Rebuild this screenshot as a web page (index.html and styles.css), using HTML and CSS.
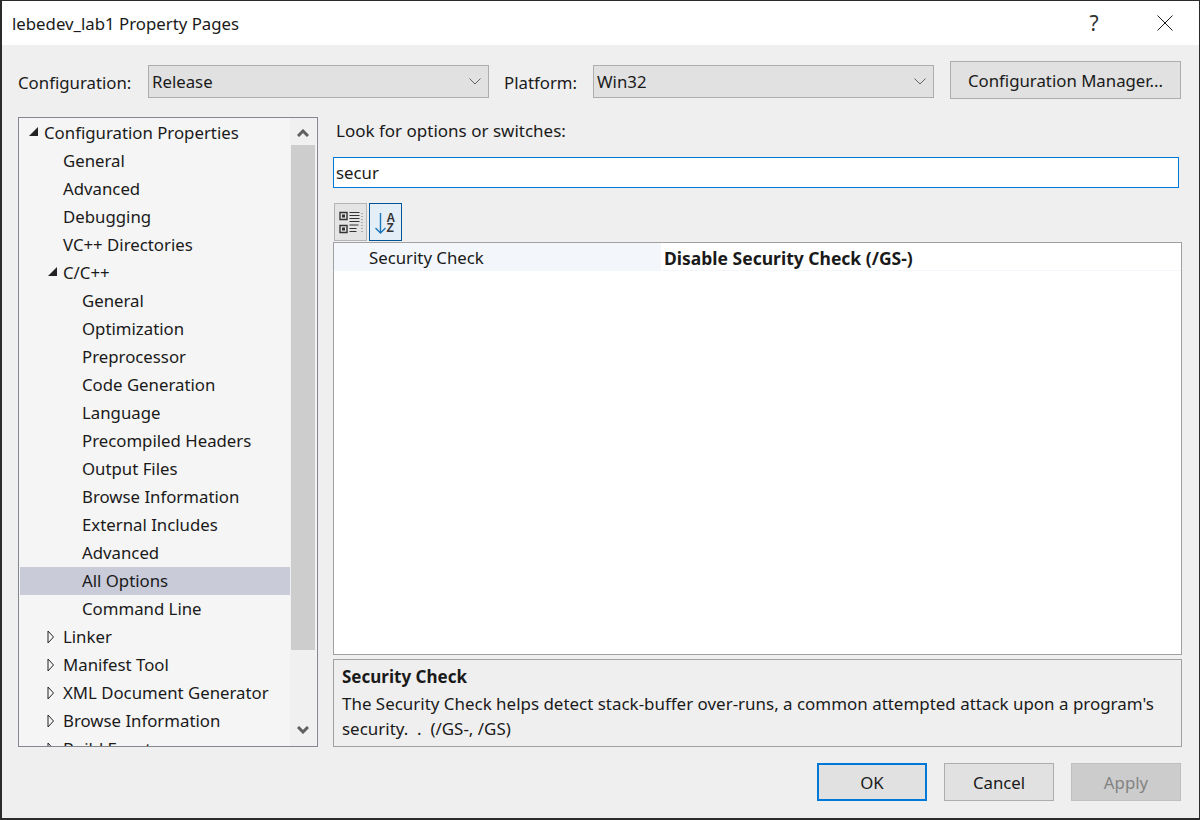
FILE: index.html
```html
<!DOCTYPE html>
<html lang="en">
<head>
    <meta charset="UTF-8">
    <title>lebedev_lab1 Property Pages</title>
    <link rel="stylesheet" href="styles.css">
</head>
<body>
    <div class="dialog">
        <div class="titlebar">
            <span class="title">lebedev_lab1 Property Pages</span>
            <span class="help">?</span>
            <svg class="close" width="16" height="16" viewBox="0 0 16 16"><path d="M.5.5l15 15M15.500.5l-15 15" stroke="#1a1a1a" fill="none"/></svg>
        </div>

        <div class="toprow">
            <label class="lbl lbl-config">Configuration:</label>
            <div class="combo combo-config">
                <span>Release</span>
                <svg width="12" height="7" viewBox="0 0 12 7"><path d="M.5.5L6 6l5.500-5.500" stroke="#606060" fill="none"/></svg>
            </div>
            <label class="lbl lbl-platform">Platform:</label>
            <div class="combo combo-platform">
                <span>Win32</span>
                <svg width="12" height="7" viewBox="0 0 12 7"><path d="M.5.5L6 6l5.500-5.500" stroke="#606060" fill="none"/></svg>
            </div>
            <button class="btn btn-manager">Configuration Manager...</button>
        </div>

        <div class="main">
            <div class="tree">
                <ul class="tree-list">
                    <li class="row"><svg class="arrow" width="12" height="12" viewBox="0 0 12 12"><path d="M10 1v9H1z" fill="#222"/></svg>Configuration Properties</li>
                    <li class="row lv1">General</li>
                    <li class="row lv1">Advanced</li>
                    <li class="row lv1">Debugging</li>
                    <li class="row lv1">VC++ Directories</li>
                    <li class="row lv0b"><svg class="arrow" width="12" height="12" viewBox="0 0 12 12"><path d="M10 1v9H1z" fill="#222"/></svg>C/C++</li>
                    <li class="row lv2">General</li>
                    <li class="row lv2">Optimization</li>
                    <li class="row lv2">Preprocessor</li>
                    <li class="row lv2">Code Generation</li>
                    <li class="row lv2">Language</li>
                    <li class="row lv2">Precompiled Headers</li>
                    <li class="row lv2">Output Files</li>
                    <li class="row lv2">Browse Information</li>
                    <li class="row lv2">External Includes</li>
                    <li class="row lv2">Advanced</li>
                    <li class="row lv2 selected">All Options</li>
                    <li class="row lv2">Command Line</li>
                    <li class="row lv0b"><svg class="arrow" width="8" height="14" viewBox="0 0 8 14"><path d="M1 1l5.500 6L1 13z" fill="none" stroke="#222"/></svg>Linker</li>
                    <li class="row lv0b"><svg class="arrow" width="8" height="14" viewBox="0 0 8 14"><path d="M1 1l5.500 6L1 13z" fill="none" stroke="#222"/></svg>Manifest Tool</li>
                    <li class="row lv0b"><svg class="arrow" width="8" height="14" viewBox="0 0 8 14"><path d="M1 1l5.500 6L1 13z" fill="none" stroke="#222"/></svg>XML Document Generator</li>
                    <li class="row lv0b"><svg class="arrow" width="8" height="14" viewBox="0 0 8 14"><path d="M1 1l5.500 6L1 13z" fill="none" stroke="#222"/></svg>Browse Information</li>
                    <li class="row lv0b"><svg class="arrow" width="8" height="14" viewBox="0 0 8 14"><path d="M1 1l5.500 6L1 13z" fill="none" stroke="#222"/></svg>Build Events</li>
                </ul>
                <div class="scrollbar">
                    <svg class="sb-arrow" width="12" height="8" viewBox="0 0 12 8"><path d="M1 7l5-5 5 5" stroke="#606060" stroke-width="3" fill="none"/></svg>
                    <div class="thumb"></div>
                    <svg class="sb-arrow" width="12" height="8" viewBox="0 0 12 8"><path d="M1 1l5 5 5-5" stroke="#606060" stroke-width="3" fill="none"/></svg>
                </div>
            </div>

            <div class="panel">
                <div class="look">Look for options or switches:</div>
                <div class="search">secur</div>
                <div class="toolbar">
                    <div class="tool tool-cat">
                        <svg width="24" height="24" viewBox="0 0 24 24">
                            <path d="M1 2.500h7v7H1zM1 15.500h7v7H1z" fill="none" stroke="#333" stroke-width="1.400"/>
                            <path d="M3 4.500h3v3H3zM3 17.500h3v3H3z" fill="#333"/>
                            <path d="M10.500 2.500h10M10.500 5.500h10M10.500 8.500h10M10.500 11.500h10M10.500 15h9M10.500 18.500h7M10.500 21.500h7" stroke="#333" fill="none"/>
                            <path d="M23 3v1M23 6v1M23 9v1M23 12v1M23 15v1M23 18v1M23 21v1" stroke="#777" fill="none"/>
                        </svg>
                    </div>
                    <div class="tool tool-az">
                        <svg width="26" height="24" viewBox="0 0 26 24">
                            <path d="M7.500 3v20M2.500 18l5 5 5-5" stroke="#1c76bc" stroke-width="1.400" fill="none"/>
                            <text class="az" x="13.500" y="11.500">A</text>
                            <text class="az" x="13.500" y="21.500">Z</text>
                        </svg>
                    </div>
                </div>
                <div class="grid">
                    <div class="grid-row">
                        <div class="grid-name">Security Check</div>
                        <div class="grid-value">Disable Security Check (/GS-)</div>
                    </div>
                </div>
                <div class="desc">
                    <div class="desc-title">Security Check</div>
                    <p>The Security Check helps detect stack-buffer over-runs, a common attempted attack upon a program's security.&nbsp; .&nbsp; (/GS-, /GS)</p>
                </div>
            </div>
        </div>

        <div class="footer">
            <button class="btn btn-foot btn-ok">OK</button>
            <button class="btn btn-foot">Cancel</button>
            <button class="btn btn-foot btn-off">Apply</button>
        </div>
    </div>
</body>
</html>
```

FILE: styles.css
```css
* {
    box-sizing: border-box;
}

html, body {
    margin: 0;
    height: 100%;
}

body {
    font-family: "Noto Sans", "Open Sans", sans-serif;
    font-size: 16.8px;
    color: #1a1a1a;
    overflow: hidden;
}

.dialog {
    width: 1200px;
    height: 820px;
    background-color: #efefef;
    border: 1px solid #2b2b2b;
    border-left-width: 2px;
    border-bottom-width: 2px;
    display: flex;
    flex-direction: column;
}

.titlebar {
    height: 44px;
    background-color: #fff;
    display: flex;
    align-items: center;
    padding-left: 10px;
    flex: none;
}

.title {
    flex: 1;
}

.help {
    font-size: 21px;
    width: 24px;
    margin-right: 51px;
    text-align: center;
    color: #333;
}

.close {
    margin-right: 26px;
}

.toprow {
    height: 72px;
    display: flex;
    align-items: flex-start;
    flex: none;
}

.lbl {
    margin-top: 26px;
    line-height: 24px;
}

.lbl-config {
    margin-left: 16px;
    width: 130px;
}

.lbl-platform {
    margin-left: 15px;
    width: 89px;
}

.combo {
    margin-top: 20px;
    width: 341px;
    height: 33px;
    background-color: #e1e1e1;
    border: 1px solid #adadad;
    display: flex;
    align-items: center;
    justify-content: space-between;
    padding: 0 7px 0 3px;
}

.btn {
    font-family: inherit;
    font-size: 16.8px;
    color: #1a1a1a;
    background-color: #e1e1e1;
    border: 1px solid #adadad;
    padding: 0;
}

.btn-manager {
    margin-top: 16px;
    margin-left: 16px;
    width: 231px;
    height: 38px;
}

.main {
    height: 630px;
    display: flex;
    flex: none;
}

.tree {
    margin-left: 16px;
    width: 300px;
    height: 630px;
    background-color: #f5f5f5;
    border: 1px solid #828790;
    display: flex;
    overflow: hidden;
}

.tree-list {
    list-style: none;
    margin: 0;
    padding: 1px 0 0 1px;
    width: 271px;
    overflow: hidden;
}

.row {
    height: 28px;
    line-height: 28px;
    padding-left: 24px;
    white-space: nowrap;
    position: relative;
}

.row .arrow {
    position: absolute;
    top: 7px;
    left: 8px;
}

.lv1 {
    padding-left: 43px;
}

.lv2 {
    padding-left: 62px;
}

.lv0b {
    padding-left: 43px;
}

.lv0b .arrow {
    left: 27px;
}

.selected {
    background-color: #c9cbd9;
}

.scrollbar {
    width: 26px;
    background-color: #f0f0f0;
    display: flex;
    flex-direction: column;
    align-items: center;
    padding-top: 11px;
}

.thumb {
    width: 24px;
    height: 505px;
    background-color: #cdcdcd;
    margin-top: 8px;
    margin-bottom: 76px;
}

.sb-arrow {
    flex: none;
}

.panel {
    margin-left: 15px;
    width: 849px;
    height: 630px;
    display: flex;
    flex-direction: column;
}

.look {
    padding-left: 3px;
    height: 40px;
    line-height: 28px;
    font-size: 17px;
}

.search {
    width: 846px;
    height: 31px;
    background-color: #fff;
    border: 1px solid #0078d7;
    padding-left: 2px;
    line-height: 29px;
}

.toolbar {
    display: flex;
    gap: 2px;
    margin-top: 15px;
    margin-left: 1px;
    height: 38px;
}

.tool {
    width: 33px;
    height: 38px;
    display: flex;
    align-items: center;
    justify-content: center;
    border: 1px solid #b4b4b4;
    background-color: #e4e4e4;
}

.tool-az {
    border-color: #005499;
    background-color: #e4eef7;
}

.az {
    font-family: "Liberation Sans", sans-serif;
    font-size: 12px;
    font-weight: bold;
    fill: #333;
}

.grid {
    margin-top: 1px;
    height: 413px;
    background-color: #fff;
    border: 1px solid #a0a0a0;
    flex: none;
}

.grid-row {
    height: 28px;
    display: flex;
    border-bottom: 1px solid #f3f6fb;
}

.grid-name {
    width: 327px;
    background-color: #f3f6fb;
    padding-left: 35px;
    line-height: 30px;
}

.grid-value {
    padding-left: 3px;
    font-weight: bold;
    font-size: 17.5px;
    line-height: 30px;
}

.desc {
    margin-top: 4px;
    height: 88px;
    border: 1px solid #a0a0a0;
    padding: 4px 8px;
    line-height: 25px;
    font-size: 16.95px;
}

.desc-title {
    font-weight: bold;
    font-size: 17px;
    line-height: 26px;
}

.desc p {
    margin: 1px 0 0;
}

.footer {
    display: flex;
    gap: 17px;
    justify-content: flex-end;
    padding: 16px 18px 0 0;
}

.btn-foot {
    width: 110px;
    height: 38px;
}

.btn-ok {
    border: 2px solid #0078d7;
}

.btn-off {
    background-color: #ccc;
    border-color: #bfbfbf;
    color: #838383;
}
```
